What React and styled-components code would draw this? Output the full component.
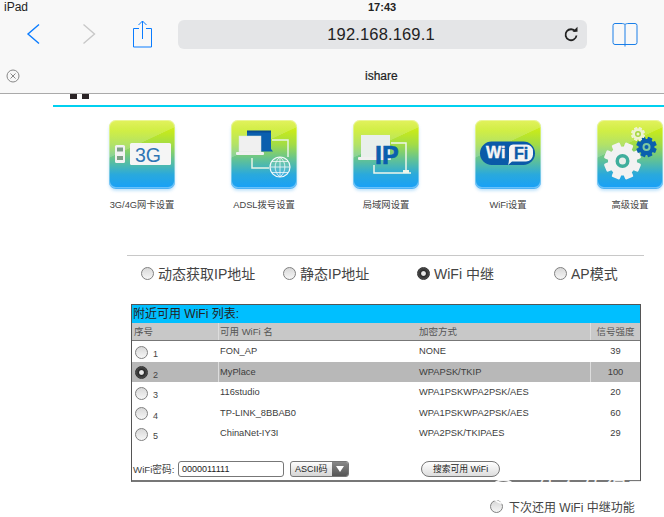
import React from 'react';
import styled, { createGlobalStyle } from 'styled-components';

const GlobalStyle = createGlobalStyle`
  html, body { margin: 0; padding: 0; background: #fff; }
  body { width: 664px; height: 517px; overflow: hidden; font-family: "Liberation Sans", "Noto Sans CJK SC", sans-serif; }
`;

const Page = styled.div`
  position: relative;
  width: 664px;
  height: 517px;
  overflow: hidden;
  background: #fff;
  color: #333;
`;

const Chrome = styled.header`
  height: 93px;
  background: #f8f8f8;
  border-bottom: 1px solid #aaa;
`;

const StatusBar = styled.div`
  height: 14px;
  display: grid;
  grid-template-columns: 364px auto 1fr;
  align-items: center;
  padding-left: 4px;
  font-size: 12px;
  color: #222;
`;

const Clock = styled.span`
  font-size: 11px;
  font-weight: bold;
`;

const Toolbar = styled.div`
  height: 36px;
  margin-top: 2px;
  display: flex;
  align-items: center;
`;

const ToolIcon = styled.svg`
  flex: none;
  margin-left: ${p => p.$left}px;
  display: block;
`;

const AddressBar = styled.div`
  width: 409px;
  height: 29px;
  margin-left: 24px;
  padding-right: 3px;
  box-sizing: border-box;
  border-radius: 6px;
  background: #e4e5e7;
  display: flex;
  align-items: center;
  justify-content: center;
  position: relative;
  font-size: 16.5px;
  color: #222;
  letter-spacing: 0.15px;
`;

const Reload = styled.svg`
  position: absolute;
  right: 8px;
  top: 6px;
`;

const TabRow = styled.div`
  height: 30px;
  margin-top: 9px;
  display: flex;
  align-items: center;
  padding-left: 6px;
`;

const TabTitle = styled.span`
  margin-left: 345px;
  font-size: 12px;
  color: #222;
  -webkit-text-stroke: 0.2px #222;
`;

const Body = styled.main`
  padding-left: 53px;
`;

const LogoBits = styled.div`
  display: flex;
  gap: 5px;
  height: 5px;
  margin-left: 17px;
  & > i { display: block; width: 7px; height: 5px; background: #2b2527; }
`;

const CyanRule = styled.div`
  height: 2px;
  margin-top: 6px;
  background: #00d0f0;
`;

const IconRow = styled.div`
  display: flex;
  gap: 56px;
  margin: 13px 0 0 56px;
`;

const IconItem = styled.div`
  width: 66px;
  flex: none;
  display: flex;
  flex-direction: column;
  align-items: center;
`;

const Tile = styled.div`
  width: 66px;
  height: 68px;
  border-radius: 7px;
  background:
    linear-gradient(155deg, rgba(255, 255, 255, 0.18) 0 38%, transparent 38.5%),
    linear-gradient(180deg, #dcef3a 0%, #c6ea1c 16%, #a2dc46 36%, #62c294 58%, #2aa9dc 80%, #18a0f8 100%);
  box-shadow: inset 0 0 0 1px rgba(255, 255, 255, 0.35), 0 1px 0 #4fb2f5, 0 3px 3px rgba(110, 190, 245, 0.4);
  overflow: hidden;
  & > svg { display: block; }
`;

const IconLabel = styled.div`
  margin-top: 11px;
  white-space: nowrap;
  font-size: 9.3px;
  line-height: 12px;
  color: #444;
`;

const ModeRow = styled.div`
  margin: 44px 0 0 74px;
  width: 517px;
  height: 34px;
  border-top: 1px solid #c8c8c8;
  display: flex;
  align-items: center;
  font-size: 14px;
  color: #444;
`;

const ModeItem = styled.label`
  width: ${p => p.$w}px;
  flex: none;
  display: flex;
  align-items: center;
  gap: 4px;
  white-space: nowrap;
  margin-left: ${p => p.$left || 0}px;
`;

const Radio = styled.span`
  flex: none;
  width: 13px;
  height: 13px;
  border-radius: 50%;
  box-sizing: border-box;
  border: 1px solid ${p => (p.$on ? '#333' : '#808080')};
  background: ${p => (p.$on
    ? 'radial-gradient(circle, #e8e8e8 0 24%, #2a2a2a 38%, #4a4a4a 70%, #888 100%)'
    : 'linear-gradient(180deg, #d8d8d8, #f6f6f6)')};
`;

const WifiPanel = styled.section`
  margin: 14px 0 0 78px;
  width: 510px;
  height: 178px;
  box-sizing: border-box;
  border: 1px solid #555;
  border-bottom: 2px solid #777;
  display: flex;
  flex-direction: column;
`;

const PanelTitle = styled.div`
  height: 18px;
  background: #00bfff;
  font-size: 12px;
  line-height: 18px;
  padding-left: 1px;
  color: #222;
`;

const wifiColumns = '86px 199px 173px 1fr';

const HeaderRow = styled.div`
  display: grid;
  grid-template-columns: ${wifiColumns};
  height: 17px;
  background: #c8c8c8;
  border-bottom: 1px solid #777;
  font-size: 9.5px;
  line-height: 17px;
  color: #555;
`;

const Cell = styled.div`
  padding-left: ${p => (p.$center ? 0 : 1)}px;
  text-align: ${p => (p.$center ? 'center' : 'left')};
  border-left: 1px solid ${p => (p.$divider ? '#ddd' : 'transparent')};
  box-sizing: border-box;
`;

const NetRow = styled.div`
  display: grid;
  grid-template-columns: ${wifiColumns};
  height: 20px;
  margin-bottom: 0.5px;
  background: ${p => (p.$selected ? '#b8b8b8' : 'transparent')};
  font-size: 9.3px;
  line-height: 20px;
  color: #3c3c3c;
`;

const SelectCell = styled.div`
  display: flex;
  align-items: center;
  gap: 5px;
  padding: 2px 0 0 3px;
  box-sizing: border-box;
  font-size: 9px;
  line-height: 10px;
  color: #444;
  & > span:last-child { margin-top: 4px; }
`;

const FormRow = styled.div`
  display: flex;
  align-items: center;
  margin-top: auto;
  margin-bottom: 1px;
  height: 20px;
  padding-left: 1px;
  font-size: 9px;
  color: #444;
`;

const FormLabel = styled.span`
  width: 45px;
  flex: none;
  font-size: 9.7px;
  white-space: nowrap;
`;

const PassInput = styled.div`
  width: 106px;
  height: 16px;
  box-sizing: border-box;
  border: 1px solid #777;
  border-radius: 3px;
  padding-left: 3px;
  background: #fff;
  line-height: 14px;
  color: #222;
`;

const Select = styled.div`
  width: 59px;
  height: 16px;
  margin-left: 6px;
  box-sizing: border-box;
  border: 1px solid #777;
  border-radius: 3px;
  overflow: hidden;
  display: flex;
  line-height: 14px;
  color: #222;
  background: linear-gradient(180deg, #fdfdfd, #d5d5d5);
`;

const SelectText = styled.span`
  flex: 1;
  padding-left: 4px;
`;

const SelectArrow = styled.span`
  width: 16px;
  flex: none;
  background: linear-gradient(180deg, #888, #555);
  display: flex;
  align-items: center;
  justify-content: center;
`;

const SearchButton = styled.div`
  width: 79px;
  height: 16px;
  margin-left: 72px;
  box-sizing: border-box;
  border: 1px solid #777;
  border-radius: 8px;
  background: linear-gradient(180deg, #fff, #ddd);
  text-align: center;
  line-height: 14px;
  font-size: 8.8px;
  color: #222;
`;

const RepeaterRow = styled.label`
  display: flex;
  align-items: center;
  gap: 5px;
  margin: 16px 0 0 437px;
  font-size: 12px;
  color: #444;
  white-space: nowrap;
`;

const Watermark = styled.div`
  position: absolute;
  left: 490px;
  top: 479px;
  display: flex;
  align-items: center;
  gap: 4px;
  color: rgba(255, 255, 255, 0.9);
  font-size: 23px;
  line-height: 25px;
  white-space: nowrap;
`;

const WatermarkBadge = styled.span`
  width: 27px;
  height: 25px;
  margin-right: 14px;
  box-sizing: border-box;
  border: 2px solid rgba(255, 255, 255, 0.9);
  border-radius: 50%;
  font-size: 17px;
  line-height: 21px;
  text-align: center;
`;

const networks = [
  { id: 1, name: 'FON_AP', auth: 'NONE', level: 39 },
  { id: 2, name: 'MyPlace', auth: 'WPAPSK/TKIP', level: 100, selected: true },
  { id: 3, name: '116studio', auth: 'WPA1PSKWPA2PSK/AES', level: 20 },
  { id: 4, name: 'TP-LINK_8BBAB0', auth: 'WPA1PSKWPA2PSK/AES', level: 60 },
  { id: 5, name: 'ChinaNet-IY3I', auth: 'WPA2PSK/TKIPAES', level: 29 },
];

function Icon3G() {
  return (
    <svg width="66" height="68" viewBox="0 0 66 68">
      <rect x="6" y="25" width="10" height="18" rx="1.500" fill="#f2f2f2" />
      <rect x="8" y="27.500" width="6" height="4" fill="#7d9f86" />
      <rect x="8" y="36" width="6" height="4" fill="#7d9f86" />
      <rect x="21" y="23" width="41" height="22" rx="1.500" fill="#f5f5f5" />
      <text x="26" y="42" fontFamily="Liberation Sans" fontSize="19.500" fill="#2f76b4">3G</text>
    </svg>
  );
}

function IconAdsl() {
  return (
    <svg width="66" height="68" viewBox="0 0 66 68" fill="none">
      <rect x="16" y="11" width="24" height="18" fill="#0a5fae" />
      <path d="M30 29h10l2 2.500H30z" fill="#0a5fae" />
      <rect x="16" y="10.500" width="24" height="2" fill="#084c92" />
      <rect x="8" y="16" width="22" height="16" fill="#f0f0f0" stroke="#d8e6dc" strokeWidth="0.500" />
      <rect x="5" y="32" width="28" height="3" rx="1" fill="#f0f0f0" />
      <path d="M41 20h16v17M21 38v10h17" stroke="#e6f3e6" strokeWidth="1.500" />
      <circle cx="49" cy="47" r="10" fill="rgba(255,255,255,0.12)" stroke="#f2f7fa" strokeWidth="1.200" />
      <path d="M39 47h20M49 37v20M41 41.500h16M41 52.500h16M49 37c-6.500 5-6.500 15 0 20M49 37c6.500 5 6.500 15 0 20" stroke="#f2f7fa" strokeWidth="0.800" />
    </svg>
  );
}

function IconLan() {
  return (
    <svg width="66" height="68" viewBox="0 0 66 68" fill="none">
      <rect x="8" y="15" width="29" height="22" fill="#e9efeb" />
      <rect x="5" y="37" width="33" height="3" rx="1" fill="#f0f0f0" />
      <path d="M38 23h15v30M21 45v8h37" stroke="#eef6ea" strokeWidth="1.500" />
      <rect x="50" y="50" width="6" height="3" fill="#eef6ea" />
      <text x="22" y="44" fontFamily="Liberation Sans" fontSize="25" fontWeight="bold" fill="#0a5fae" stroke="#0a5fae" strokeWidth="0.600">IP</text>
    </svg>
  );
}

function IconWifi() {
  return (
    <svg width="66" height="68" viewBox="0 0 66 68">
      <rect x="5" y="21.500" width="55" height="23.500" rx="11.700" fill="#0a5aa8" />
      <path d="M38 24.500h13.500a6.500 6.500 0 0 1 6.500 6.500v3.500a7 7 0 0 1-7 7H37l-4 3.500c1-3 1-5 1-9v-7a4.500 4.500 0 0 1 4-4.500z" fill="#f5f5f5" />
      <text x="11" y="38" fontFamily="Liberation Sans" fontSize="16" fontWeight="bold" fill="#f5f5f5" stroke="#f5f5f5" strokeWidth="0.400">Wi</text>
      <text x="39" y="39" fontFamily="Liberation Sans" fontSize="16" fontWeight="bold" fill="#0a5aa8" stroke="#0a5aa8" strokeWidth="0.400">Fi</text>
    </svg>
  );
}

function Gear({ cx, cy, r, ring, hole, fill, ringFill, holeFill }) {
  const spokes = [0, 45, 90, 135];
  return (
    <g>
      {spokes.map(a => (
        <rect
          key={a}
          x={cx - r * 0.3}
          y={cy - r * 1.28}
          width={r * 0.6}
          height={r * 2.56}
          rx={r * 0.1}
          fill={fill}
          transform={`rotate(${a + 22.5} ${cx} ${cy})`}
        />
      ))}
      <circle cx={cx} cy={cy} r={r} fill={fill} />
      <circle cx={cx} cy={cy} r={ring} fill={ringFill} />
      <circle cx={cx} cy={cy} r={hole} fill={holeFill} />
    </g>
  );
}

function IconGear() {
  return (
    <svg width="66" height="68" viewBox="0 0 66 68">
      <Gear cx={25.500} cy={41} r={14.500} ring={7} hole={3.500} fill="#f2f2f2" ringFill="#3fae9c" holeFill="#e8eeea" />
      <Gear cx={49.500} cy={27} r={8} ring={4} hole={2} fill="#0a5fae" ringFill="#7fc9a0" holeFill="#0a5fae" />
      <Gear cx={41} cy={14} r={5.500} ring={3} hole={1.500} fill="#eef3d2" ringFill="#a6d640" holeFill="#eef3d2" />
    </svg>
  );
}

const settings = [
  { label: '3G/4G网卡设置', Art: Icon3G },
  { label: 'ADSL拨号设置', Art: IconAdsl },
  { label: '局域网设置', Art: IconLan },
  { label: 'WiFi设置', Art: IconWifi },
  { label: '高级设置', Art: IconGear },
];

export default function App() {
  return (
    <Page>
      <GlobalStyle />
      <Chrome>
        <StatusBar>
          <span>iPad</span>
          <Clock>17:43</Clock>
          <span />
        </StatusBar>
        <Toolbar>
          <ToolIcon $left={26} width="14" height="22" viewBox="0 0 14 22" fill="none" stroke="#0a7cff" strokeWidth="1.400">
            <path d="M13 1.500L2 11l11 9.500" />
          </ToolIcon>
          <ToolIcon $left={42} width="14" height="22" viewBox="0 0 14 22" fill="none" stroke="#c8c8c8" strokeWidth="1.400">
            <path d="M1.500 1.500L12.500 11l-11 9.500" />
          </ToolIcon>
          <ToolIcon $left={36} width="22" height="28" viewBox="0 0 22 28" fill="none" stroke="#0a7cff" strokeWidth="1">
            <path d="M7 8.500H1.500v18.500h18V8.500H14M10.500 19V1M6.500 5l4-4 4 4" />
          </ToolIcon>
          <AddressBar>
            192.168.169.1
            <Reload width="16" height="17" viewBox="0 0 16 17" fill="none" stroke="#222" strokeWidth="1.800">
              <path d="M12.500 5.500a5.500 5.500 0 1 0 1 4" />
              <path d="M9.500 5.800h5v-5z" fill="#222" stroke="none" />
            </Reload>
          </AddressBar>
          <ToolIcon $left={25} width="26" height="25" viewBox="0 0 26 25" fill="none" stroke="#1a7fe8" strokeWidth="1">
            <path d="M13 2.500c-1-.8-2-1-4-1H3a2 2 0 0 0-2 2v17a2 2 0 0 0 2 2h20a2 2 0 0 0 2-2v-17a2 2 0 0 0-2-2h-6c-2 0-3 .2-4 1zM13 2.500V24.500" />
          </ToolIcon>
        </Toolbar>
        <TabRow>
          <svg width="14" height="14" viewBox="0 0 14 14" fill="none" stroke="#888" strokeWidth="1">
            <circle cx="7" cy="7" r="6" />
            <path d="M4.500 4.500l5 5M9.500 4.500l-5 5" />
          </svg>
          <TabTitle>ishare</TabTitle>
        </TabRow>
      </Chrome>
      <Body>
        <LogoBits><i /><i /></LogoBits>
        <CyanRule />
        <IconRow>
          {settings.map(({ label, Art }) => (
            <IconItem key={label}>
              <Tile><Art /></Tile>
              <IconLabel>{label}</IconLabel>
            </IconItem>
          ))}
        </IconRow>
        <ModeRow>
          <ModeItem $left={14} $w={142}><Radio />动态获取IP地址</ModeItem>
          <ModeItem $w={134}><Radio />静态IP地址</ModeItem>
          <ModeItem $w={137}><Radio $on />WiFi 中继</ModeItem>
          <ModeItem $w={80}><Radio />AP模式</ModeItem>
        </ModeRow>
        <WifiPanel>
          <PanelTitle>附近可用 WiFi 列表:</PanelTitle>
          <HeaderRow>
            <Cell>序号</Cell>
            <Cell $divider>可用 WiFi 名</Cell>
            <Cell>加密方式</Cell>
            <Cell $divider $center>信号强度</Cell>
          </HeaderRow>
          {networks.map(n => (
            <NetRow key={n.id} $selected={n.selected}>
              <SelectCell>
                <Radio $on={n.selected} />
                <span>{n.id}</span>
              </SelectCell>
              <Cell $divider={n.selected}>{n.name}</Cell>
              <Cell>{n.auth}</Cell>
              <Cell $divider={n.selected} $center>{n.level}</Cell>
            </NetRow>
          ))}
          <FormRow>
            <FormLabel>WiFi密码:</FormLabel>
            <PassInput>0000011111</PassInput>
            <Select>
              <SelectText>ASCII码</SelectText>
              <SelectArrow>
                <svg width="8" height="6" viewBox="0 0 8 6"><path d="M0 0h8L4 6z" fill="#fff" /></svg>
              </SelectArrow>
            </Select>
            <SearchButton>搜索可用 WiFi</SearchButton>
          </FormRow>
        </WifiPanel>
        <RepeaterRow><Radio />下次还用 WiFi 中继功能</RepeaterRow>
      </Body>
      <Watermark>
        <WatermarkBadge>值</WatermarkBadge>
        什么值得买
      </Watermark>
    </Page>
  );
}
